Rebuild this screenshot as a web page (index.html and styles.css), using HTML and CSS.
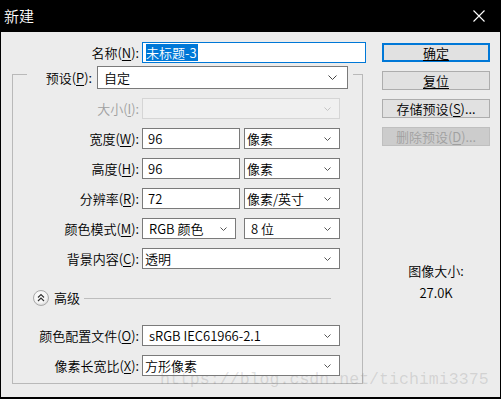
FILE: index.html
```html
<!DOCTYPE html>
<html lang="zh-CN">
<head>
  <meta charset="UTF-8" />
  <title>新建</title>
  <link rel="stylesheet" href="styles.css">
</head>
<body>

<div class="window">
  <div class="titlebar">
    <span class="title">新建</span>
    <svg class="close" width="12" height="12" viewBox="0 0 12 12"><path d="M0.5 0.5 L11.5 11.5 M11.5 0.5 L0.5 11.5" stroke="#fff" stroke-width="1.1" fill="none"/></svg>
  </div>

  <div class="main">
    <div class="left">
      <div class="name-row">
        <label class="lbl">名称(<u>N</u>):</label>
        <div class="input name-input"><span class="selected">未标题-3</span></div>
      </div>

      <fieldset class="group">
        <legend class="preset">
          <label class="preset-lbl">预设(<u>P</u>):</label>
          <div class="select preset-select">
            <span class="val wide">自定</span>
            <svg class="chev big" width="9" height="5" viewBox="0 0 9 5"><path d="M0.5 0.5 L4.5 4.5 L8.5 0.5" fill="none" stroke="#444"/></svg>
          </div>
        </legend>

        <div class="row first">
          <label class="lbl off">大小(<u>I</u>):</label>
          <div class="select full disabled">
            <span class="val"></span>
            <svg class="chev" width="7" height="4" viewBox="0 0 7 4"><path d="M0.5 0.5 L3.5 3.5 L6.5 0.5" fill="none" stroke="#c4c4c4"/></svg>
          </div>
        </div>

        <div class="row">
          <label class="lbl">宽度(<u>W</u>):</label>
          <div class="input num"><span class="val">96</span></div>
          <div class="select unit">
            <span class="val">像素</span>
            <svg class="chev" width="7" height="4" viewBox="0 0 7 4"><path d="M0.5 0.5 L3.5 3.5 L6.5 0.5" fill="none" stroke="#555"/></svg>
          </div>
        </div>

        <div class="row">
          <label class="lbl">高度(<u>H</u>):</label>
          <div class="input num"><span class="val">96</span></div>
          <div class="select unit">
            <span class="val">像素</span>
            <svg class="chev" width="7" height="4" viewBox="0 0 7 4"><path d="M0.5 0.5 L3.5 3.5 L6.5 0.5" fill="none" stroke="#555"/></svg>
          </div>
        </div>

        <div class="row">
          <label class="lbl">分辨率(<u>R</u>):</label>
          <div class="input num"><span class="val">72</span></div>
          <div class="select unit">
            <span class="val">像素/英寸</span>
            <svg class="chev" width="7" height="4" viewBox="0 0 7 4"><path d="M0.5 0.5 L3.5 3.5 L6.5 0.5" fill="none" stroke="#555"/></svg>
          </div>
        </div>

        <div class="row">
          <label class="lbl">颜色模式(<u>M</u>):</label>
          <div class="select mode">
            <span class="val wide">RGB 颜色</span>
            <svg class="chev" width="7" height="4" viewBox="0 0 7 4"><path d="M0.5 0.5 L3.5 3.5 L6.5 0.5" fill="none" stroke="#555"/></svg>
          </div>
          <div class="select unit">
            <span class="val wide">8 位</span>
            <svg class="chev" width="7" height="4" viewBox="0 0 7 4"><path d="M0.5 0.5 L3.5 3.5 L6.5 0.5" fill="none" stroke="#555"/></svg>
          </div>
        </div>

        <div class="row">
          <label class="lbl">背景内容(<u>C</u>):</label>
          <div class="select full">
            <span class="val">透明</span>
            <svg class="chev" width="7" height="4" viewBox="0 0 7 4"><path d="M0.5 0.5 L3.5 3.5 L6.5 0.5" fill="none" stroke="#555"/></svg>
          </div>
        </div>

        <div class="advanced">
          <svg class="adv-icon" width="16" height="16" viewBox="0 0 16 16">
            <defs>
              <radialGradient id="knob" cx="0.45" cy="0.4" r="0.6">
                <stop offset="0" stop-color="#ffffff"/>
                <stop offset="0.7" stop-color="#f4f4f4"/>
                <stop offset="1" stop-color="#d6d6d6"/>
              </radialGradient>
            </defs>
            <circle cx="8" cy="8" r="7.5" fill="url(#knob)" stroke="#a9a9a9"/>
            <path d="M5 7.5 L8 4.5 L11 7.5 M5 11 L8 8 L11 11" fill="none" stroke="#333" stroke-width="1.2"/>
          </svg>
          <span class="adv-text">高级</span>
          <span class="adv-line"></span>
        </div>

        <div class="row profile">
          <label class="lbl">颜色配置文件(<u>O</u>):</label>
          <div class="select full">
            <span class="val wide">sRGB IEC61966-2.1</span>
            <svg class="chev" width="7" height="4" viewBox="0 0 7 4"><path d="M0.5 0.5 L3.5 3.5 L6.5 0.5" fill="none" stroke="#555"/></svg>
          </div>
        </div>

        <div class="row">
          <label class="lbl">像素长宽比(<u>X</u>):</label>
          <div class="select full">
            <span class="val">方形像素</span>
            <svg class="chev" width="7" height="4" viewBox="0 0 7 4"><path d="M0.5 0.5 L3.5 3.5 L6.5 0.5" fill="none" stroke="#555"/></svg>
          </div>
        </div>
      </fieldset>
    </div>

    <div class="right">
      <button class="btn primary"><u>确定</u></button>
      <button class="btn"><u>复位</u></button>
      <button class="btn">存储预设(<u>S</u>)...</button>
      <button class="btn" disabled>删除预设(<u>D</u>)...</button>

      <div class="info">
        <div>图像大小:</div>
        <div>27.0K</div>
      </div>
    </div>
  </div>

  <div class="watermark">https://blog.csdn.net/tichimi3375</div>
</div>

</body>
</html>
```

FILE: styles.css
```css
* {
  box-sizing: border-box;
}

body {
  margin: 0;
  background: #fff;
  font-family: "Noto Sans CJK SC", "Noto Sans", sans-serif;
  font-size: 13px;
  font-weight: 350;
  color: #000;
}

u {
  text-decoration: underline;
  text-underline-offset: 2px;
}

.window {
  position: relative;
  width: 501px;
  height: 399px;
  background: #ececec;
  border: 1px solid #000;
  border-top: none;
  border-bottom-width: 2px;
  overflow: hidden;
}

.titlebar {
  height: 32px;
  background: #000;
  color: #fff;
  display: flex;
  align-items: center;
  justify-content: space-between;
  padding: 0 15px 0 3px;
}

.title {
  font-size: 15px;
  line-height: 20px;
}

.main {
  display: flex;
}

.left {
  width: 381px;
}

.right {
  width: 108px;
}

/* name */
.name-row {
  display: flex;
  height: 21px;
  margin-top: 10px;
}

.lbl {
  width: 141px;
  padding-right: 3px;
  text-align: right;
  line-height: 21px;
  white-space: nowrap;
}

.lbl.off {
  color: #a0a0a0;
}

.input, .select {
  height: 21px;
  background: #fff;
  border: 1px solid #7a7a7a;
  display: flex;
  align-items: center;
  line-height: 19px;
}

.name-input {
  width: 224px;
  border-color: #0078d7;
  padding-left: 3px;
}

.selected {
  background: #0078d7;
  color: #fff;
  line-height: 17px;
  padding-right: 1px;
}

/* group box */
.group {
  margin: -4px 0 0 11px;
  width: 351px;
  min-width: 0;
  padding: 0 0 7px 0;
  border: 1px solid #b9b9b9;
}

.preset {
  margin-left: 14px;
  width: 326px;
  padding: 7px 5px 0 0;
  display: flex;
}

.preset-lbl {
  width: 70px;
  padding-right: 5px;
  text-align: right;
  line-height: 23px;
  white-space: nowrap;
}

.preset-select {
  width: 251px;
  height: 23px;
}

.row {
  display: flex;
  height: 21px;
  margin-top: 9px;
}

.row.first {
  margin-top: 9px;
}

.row .lbl {
  width: 129px;
}

.val {
  flex: 1;
  padding-left: 2px;
  white-space: nowrap;
}

.val.wide {
  padding-left: 6px;
}

.chev {
  margin-right: 8px;
}

.chev.big {
  margin-right: 10px;
}

.full {
  width: 198px;
}

.num {
  width: 98px;
  padding-left: 3px;
}

.unit {
  width: 96px;
  margin-left: 4px;
}

.mode {
  width: 94px;
  margin-right: 4px;
}

.mode + .unit {
  margin-left: 4px;
}

.select.disabled {
  background: #f0f0f0;
  border-color: #d5d5d5;
}

.advanced {
  display: flex;
  align-items: center;
  height: 21px;
  margin-top: 18px;
  padding-left: 20px;
}

.adv-text {
  margin-left: 5px;
  line-height: 21px;
}

.adv-line {
  flex: 1;
  height: 1px;
  background: #bdbdbd;
  margin: 1px 31px 0 4px;
}

.row.profile {
  margin-top: 17px;
}

/* buttons */
.btn {
  display: block;
  width: 108px;
  height: 19px;
  margin: 9px 0 0 0;
  padding: 0;
  background: #e1e1e1;
  border: 1px solid #adadad;
  font-family: inherit;
  font-size: 13px;
  font-weight: inherit;
  line-height: 16px;
  color: #000;
  text-align: center;
}

.btn.primary {
  margin-top: 11px;
  border: 2px solid #0078d7;
  line-height: 14px;
}

.btn:disabled {
  background: #cccccc;
  border-color: #bfbfbf;
  color: #a0a0a0;
}

.info {
  margin-top: 114px;
  text-align: center;
  line-height: 22px;
}

.watermark {
  position: absolute;
  left: 159px;
  top: 370px;
  font-family: "Liberation Mono", monospace;
  font-size: 16.6px;
  font-weight: 400;
  line-height: 19px;
  color: rgba(120, 120, 120, 0.22);
  white-space: nowrap;
}
```
